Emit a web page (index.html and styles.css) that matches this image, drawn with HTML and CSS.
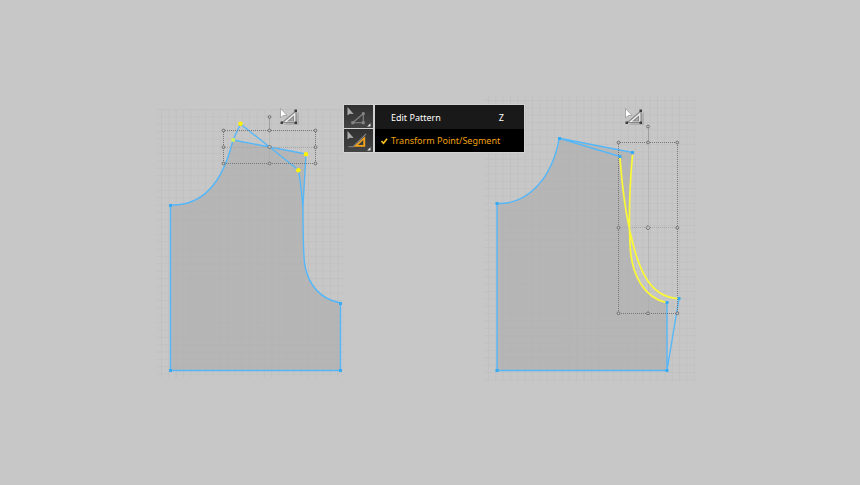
FILE: index.html
```html
<!DOCTYPE html>
<html lang="en">
<head>
<meta charset="utf-8">
<title>Transform Point/Segment</title>
<link rel="stylesheet" href="styles.css">
</head>
<body>
<svg class="defs" aria-hidden="true">
  <defs>
    <pattern id="grid-left" x="161" y="109" width="7.35" height="7.35" patternUnits="userSpaceOnUse">
      <path class="grid-line" d="M.5 0V7.35M0 .5H7.35"/>
    </pattern>
    <pattern id="grid-right" x="488" y="100" width="7.35" height="7.35" patternUnits="userSpaceOnUse">
      <path class="grid-line" d="M.5 0V7.35M0 .5H7.35"/>
    </pattern>
    <symbol id="cursor" viewBox="0 0 20 20" overflow="visible">
      <path class="cursor-shadow" d="M4 17 19 4v13z"/>
      <path class="cursor-set" fill-rule="evenodd" d="M2.500 14.500 16 3v11.500zM8.500 13h5V8.500z"/>
      <path class="cursor-dots" d="M.5 13.500h2.500v2.500H.5zM14.500 1.500h2.500v2.500h-2.500zM14.500 13.500h2.500v2.500h-2.500z"/>
      <path class="cursor-arrow" d="M.5.500v9.500l2.300-2.300 4.200-.4z"/>
    </symbol>
  </defs>
</svg>
<main class="board">
  <svg class="piece" width="192" height="288" viewBox="156 96 192 288" role="img" aria-label="Pattern with points transformed">
    <rect x="157" y="109" width="187" height="269" fill="url(#grid-left)"/>
    <path class="fabric" d="M170.500 205C200 206 222 186 233 140L306 154 303 205C303 240 303 256 305 266 309 286 321 299 340.500 303V370.500H170.500z"/>
    <path class="edge" d="M233 140C222 186 200 206 170.500 205V370.500H340.500V303C321 299 309 286 305 266 303 256 303 240 303 205L306 154 233 140 240.500 124 298.500 170C301 187 303 200 303 214"/>
    <path class="edge-points" d="M169 204h3v3h-3zM169 369h3v3h-3zM339 369h3v3h-3zM339 302h3v3h-3z"/>
    <path class="bounds" d="M223.500 130.500H315.500V163.500H223.500zM269.500 117V131"/>
    <path class="bounds faint" d="M223.500 147.500H315.500M269.500 131V163"/>
    <g class="selected"><circle cx="240.500" cy="123.800" r="2.300"/><circle class="dim" cx="233.200" cy="140" r="2"/><circle cx="306" cy="154.200" r="2.300"/><circle cx="298.300" cy="170.300" r="2.300"/></g>
    <g class="handles"><circle cx="269.500" cy="117" r="1.400"/><circle cx="223.500" cy="130.500" r="1.400"/><circle cx="269.500" cy="130.500" r="1.400"/><circle cx="315.500" cy="130.500" r="1.400"/><circle cx="223.500" cy="147.200" r="1.400"/><circle cx="315.500" cy="147.200" r="1.400"/><circle cx="223.500" cy="163.500" r="1.400"/><circle cx="269.500" cy="163.500" r="1.400"/><circle cx="315.500" cy="163.500" r="1.400"/><path d="M269.500 145l2 2-2 2-2-2z"/></g>
    <use href="#cursor" x="280" y="108" width="20" height="20"/>
  </svg>
  <svg class="piece" width="220" height="288" viewBox="484 96 220 288" role="img" aria-label="Pattern with a segment transformed">
    <rect x="484" y="96" width="212" height="286" fill="url(#grid-right)"/>
    <path class="fabric" d="M497 203.500C528 205 552 178 559.300 138.300L632.500 153C629 192 629 222 630 244 631 276 645 298 667 302.500V370.500H497z"/>
    <path class="edge" d="M620 156.500 559.300 138.300C552 178 528 205 497 203.500V370.500H667V302.500M559.300 138.300 632.500 152.500M679 298.500 667 370.500"/>
    <path class="bounds" d="M618.500 142.500H677.500V313.500H618.500zM648.500 127V142"/>
    <path class="bounds faint" d="M618.500 227.500H677.500M648.500 142V313"/>
    <path class="edge picked" d="M632.500 155C629 192 629 222 630 244 631 276 645 298 666 302.500M620 158C622 185 627 220 632 240 640 274 652 297 678 298.500"/>
    <path class="edge-points" d="M495.500 202h3v3h-3zM495.500 369h3v3h-3zM665.500 369h3v3h-3zM665.500 301h3v3h-3zM677.500 297h3v3h-3zM631 151h3v3h-3zM618.500 155h3v3h-3zM558 137h3v3h-3z"/>
    <g class="handles"><circle cx="648" cy="126.500" r="1.400"/><circle cx="618.500" cy="142.500" r="1.400"/><circle cx="648" cy="142.500" r="1.400"/><circle cx="677.300" cy="142.500" r="1.400"/><circle cx="618.500" cy="227.800" r="1.400"/><circle cx="677.300" cy="227.800" r="1.400"/><circle cx="618.500" cy="313.300" r="1.400"/><circle cx="648" cy="313.300" r="1.400"/><circle cx="677.300" cy="313.300" r="1.400"/><path d="M648 225.500l2.200 2.200-2.200 2.200-2.200-2.200z"/></g>
    <use href="#cursor" x="625" y="108" width="20" height="20"/>
  </svg>
  <nav class="menu" aria-label="Pattern tools">
    <button class="item" type="button">
      <svg class="tool" viewBox="0 0 29 24" aria-hidden="true">
        <path class="tool-arrow" d="M3 2v9l2.500-2 4 .3z"/>
        <path class="tool-line" d="M8.500 18.500 19.500 9v9.500z"/>
        <path class="tool-dot" d="M7 17h3v3H7zM18 7.500h3v3h-3zM18 17h3v3h-3z"/>
        <path class="tool-more" d="M27 19v3.500h-3.500z"/>
      </svg>
      <span class="row"><span class="check"></span><span class="name">Edit Pattern</span><kbd class="key">Z</kbd></span>
    </button>
    <button class="item active" type="button">
      <svg class="tool" viewBox="0 0 29 24" aria-hidden="true">
        <path class="tool-arrow" d="M3 2v9l2.500-2 4 .3z"/>
        <path class="tool-line" d="M4 18.500H9L22.500 5"/>
        <path class="tool-set" fill-rule="evenodd" d="M9.500 18.500 21.500 7.500v11zM14 16.700h5.500V11.500z"/>
        <path class="tool-more" d="M27 19v3.500h-3.500z"/>
      </svg>
      <span class="row"><svg class="check" viewBox="0 0 16 10" aria-hidden="true"><path d="M6.500 5 8.500 7.300 12 2.700"/></svg><span class="name">Transform Point/Segment</span></span>
    </button>
  </nav>
</main>
</body>
</html>
```
FILE: styles.css
```css
* { box-sizing: border-box; }

body {
  margin: 0;
  min-height: 100vh;
  background: #c7c7c7;
  font-family: "Noto Sans", sans-serif;
  font-size: 9px;
}

.defs { position: absolute; width: 0; height: 0; }

.board {
  position: relative;
  display: flex;
  justify-content: space-between;
  max-width: 548px;
  margin: 0 auto;
  padding-top: 96px;
}

.piece { display: block; }

.grid-line { stroke: #c1c1c1; stroke-width: 1; fill: none; }
.fabric { fill: #b0b0b0; fill-opacity: .76; }
.edge { fill: none; stroke: #55b7f8; stroke-width: 1.4; stroke-linejoin: round; }
.picked { stroke: #fbf935; stroke-width: 1.7; }
.edge-points { fill: #36abf3; }
.bounds { fill: none; stroke: #777; stroke-width: 1; stroke-dasharray: 1 1; stroke-dashoffset: .5; }
.faint { stroke: #a8a8a8; }
.selected { fill: #fff200; }
.selected .dim { fill: #d5ee5a; }
.handles { fill: #c4c4c4; stroke: #666; stroke-width: .9; }

.cursor-shadow { fill: #999; opacity: .5; }
.cursor-set { fill: #eee; stroke: #888; stroke-width: 1.2; }
.cursor-dots { fill: #3d3d3d; }
.cursor-arrow { fill: #fff; stroke: #909090; stroke-width: .7; }

.menu {
  position: absolute;
  top: 104px;
  left: 187px;
  width: 182px;
  display: grid;
  gap: 1px;
  padding: 1px;
  background: #d2d2d2;
}

.item {
  display: flex;
  gap: 2px;
  height: 23px;
  padding: 0;
  border: 0;
  background: none;
  color: #fff;
  font: inherit;
  text-align: left;
}

.tool { width: 29px; height: 23px; background: linear-gradient(#303030, #444); }
.tool-arrow { fill: #aaa; }
.tool-line { fill: none; stroke: #858585; stroke-width: 1.2; }
.tool-dot { fill: #858585; }
.tool-more { fill: #e0e0e0; }
.tool-set { fill: #f5a31a; }

.row {
  flex: 1;
  display: flex;
  align-items: center;
  height: 25px;
  padding-right: 20px;
  background: #191919;
}

.active { color: #f0a010; }
.active .row { height: 23px; background: #000; }

.check { width: 16px; height: 10px; fill: none; stroke: #ffc421; stroke-width: 1.6; }
.name { flex: 1; white-space: nowrap; }
.key { font: inherit; }
```
